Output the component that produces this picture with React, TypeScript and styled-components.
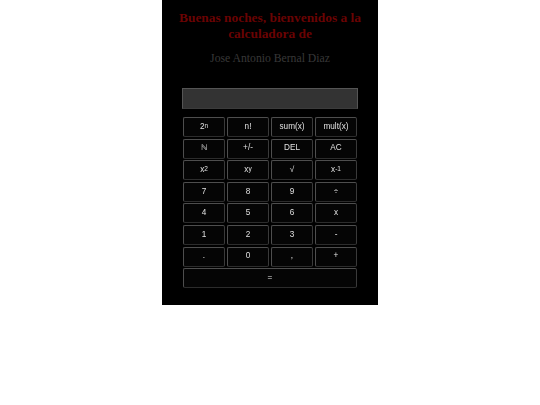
import React from "react";
import styled, { createGlobalStyle } from "styled-components";

const Global = createGlobalStyle`
  html, body {
    margin: 0;
    padding: 0;
    background: #fff;
  }
`;

const Panel = styled.div`
  width: 216px;
  height: 305px;
  margin: 0 auto;
  background: #000;
  display: flex;
  flex-direction: column;
  align-items: center;
  padding-top: 9.5px;
  box-sizing: border-box;
`;

const Title = styled.h1`
  margin: 0;
  font-family: "Liberation Serif", "Times New Roman", serif;
  font-weight: bold;
  font-size: 13.4px;
  line-height: 16px;
  color: #6a0303;
  text-align: center;
`;

const Author = styled.p`
  margin: 10px 0 0;
  font-family: "Liberation Serif", "Times New Roman", serif;
  font-size: 11.7px;
  color: #383838;
  text-align: center;
`;

const Display = styled.div`
  width: 176px;
  height: 21px;
  margin-top: 23px;
  box-sizing: border-box;
  background: #333;
  border: 1px solid #555;
  border-bottom-color: #3c3c3c;
`;

const Keys = styled.div`
  margin-top: 8px;
  width: 174px;
  display: grid;
  grid-template-columns: repeat(4, 1fr);
  grid-auto-rows: 20px;
  column-gap: 2px;
  row-gap: 1.6px;
  will-change: transform;
`;

const Key = styled.button<{ $wide?: boolean }>`
  grid-column: ${(p) => (p.$wide ? "1 / -1" : "auto")};
  margin: 0;
  padding: 0;
  background: #050505;
  color: #e0e0e0;
  border: 1px solid #4e4e4e;
  border-bottom-color: #2c2c2c;
  border-right-color: #3a3a3a;
  border-radius: 2px;
  font-family: "Liberation Sans", Arial, sans-serif;
  font-size: 8.2px;
  line-height: 1;
  display: flex;
  align-items: center;
  justify-content: center;

  sup {
    font-size: 6.5px;
    line-height: 0;
    position: relative;
    top: -1px;
  }
`;

const keys: React.ReactNode[] = [
  <>2<sup>n</sup></>,
  "n!",
  "sum(x)",
  "mult(x)",
  "ℕ",
  "+/-",
  "DEL",
  "AC",
  <>x<sup>2</sup></>,
  <>x<sup>y</sup></>,
  "√",
  <>x<sup>-1</sup></>,
  "7",
  "8",
  "9",
  "÷",
  "4",
  "5",
  "6",
  "x",
  "1",
  "2",
  "3",
  "-",
  ".",
  "0",
  ",",
  "+",
];

export default function App() {
  return (
    <>
      <Global />
      <Panel>
        <Title>
          Buenas noches, bienvenidos a la
          <br />
          calculadora de
        </Title>
        <Author>Jose Antonio Bernal Diaz</Author>
        <Display />
        <Keys>
          {keys.map((k, i) => (
            <Key key={i}>{k}</Key>
          ))}
          <Key $wide>=</Key>
        </Keys>
      </Panel>
    </>
  );
}
